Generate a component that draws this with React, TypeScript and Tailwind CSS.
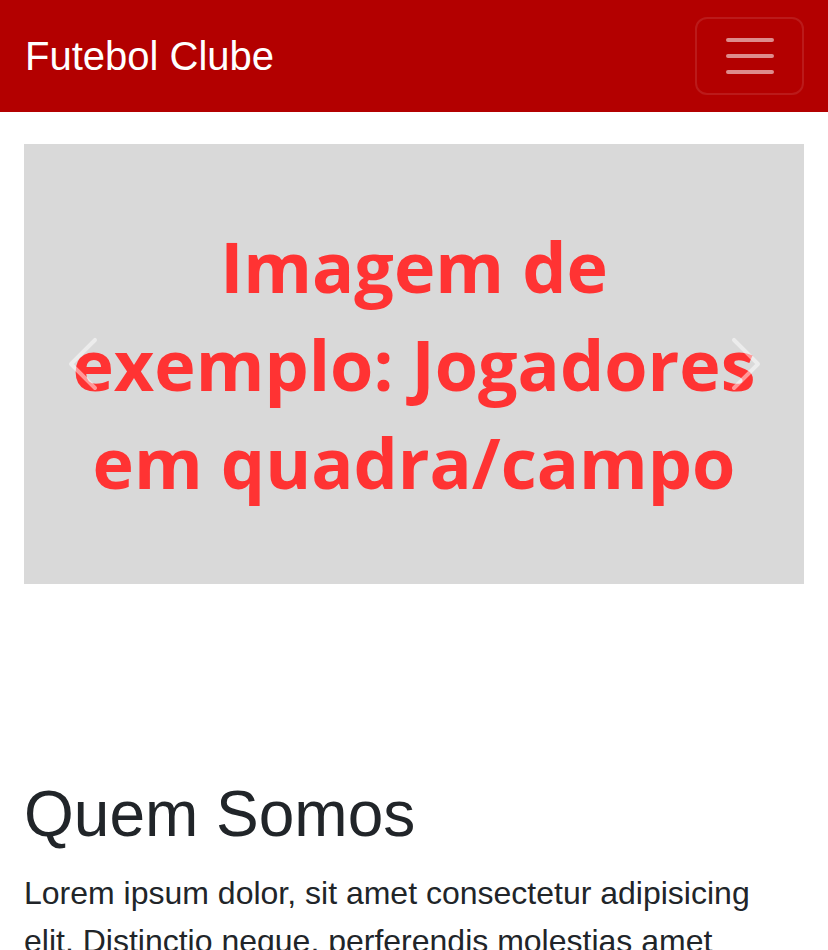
export default function App() {
  return (
    <div className="min-h-screen bg-white font-['Liberation_Sans',Arial,sans-serif] text-[#212529]">
      <nav className="h-[112px] bg-[#b30000] flex items-center justify-between pl-[25px] pr-[24px]">
        <a href="#" className="text-white text-[40px] leading-none">Futebol Clube</a>
        <button
          type="button"
          aria-label="Menu"
          className="w-[109px] h-[78px] rounded-[12px] border-2 border-white/10 flex items-center justify-center"
        >
          <svg width="60" height="60" viewBox="0 0 30 30" aria-hidden="true">
            <path
              d="M4 7h22M4 15h22M4 23h22"
              stroke="rgba(255,255,255,0.55)"
              strokeWidth="2"
              strokeLinecap="round"
              strokeMiterlimit="10"
              fill="none"
            />
          </svg>
        </button>
      </nav>

      <main className="px-[24px] pt-[32px]">
        <div className="relative h-[440px] bg-[#d9d9d9] overflow-hidden flex items-center justify-center">
          <div className="text-center font-['Open_Sans',sans-serif] font-bold text-[70px] leading-[98px] text-[#ff3333] whitespace-nowrap">
            <div>Imagem de</div>
            <div>exemplo: Jogadores</div>
            <div>em quadra/campo</div>
          </div>

          <button type="button" aria-label="Anterior" className="absolute left-0 top-0 bottom-0 w-[15%] flex items-center justify-center opacity-50">
            <svg width="64" height="64" viewBox="0 0 16 16" fill="#fff" aria-hidden="true">
              <path d="M11.354 1.646a.5.5 0 0 1 0 .708L5.707 8l5.647 5.646a.5.5 0 0 1-.708.708l-6-6a.5.5 0 0 1 0-.708l6-6a.5.5 0 0 1 .708 0z" />
            </svg>
          </button>
          <button type="button" aria-label="Próximo" className="absolute right-0 top-0 bottom-0 w-[15%] flex items-center justify-center opacity-50">
            <svg width="64" height="64" viewBox="0 0 16 16" fill="#fff" aria-hidden="true">
              <path d="M4.646 1.646a.5.5 0 0 1 .708 0l6 6a.5.5 0 0 1 0 .708l-6 6a.5.5 0 0 1-.708-.708L10.293 8 4.646 2.354a.5.5 0 0 1 0-.708z" />
            </svg>
          </button>
        </div>

        <section className="mt-[192px]">
          <h1 className="text-[64px] leading-[1.2] mb-[16px]">Quem Somos</h1>
          <p className="text-[32px] leading-[48px]">
            Lorem ipsum dolor, sit amet consectetur adipisicing elit. Distinctio neque, perferendis molestias amet
            quibusdam voluptatum, nostrum sunt iure dolores ipsam repellendus quae officiis eius.
          </p>
        </section>
      </main>
    </div>
  );
}
